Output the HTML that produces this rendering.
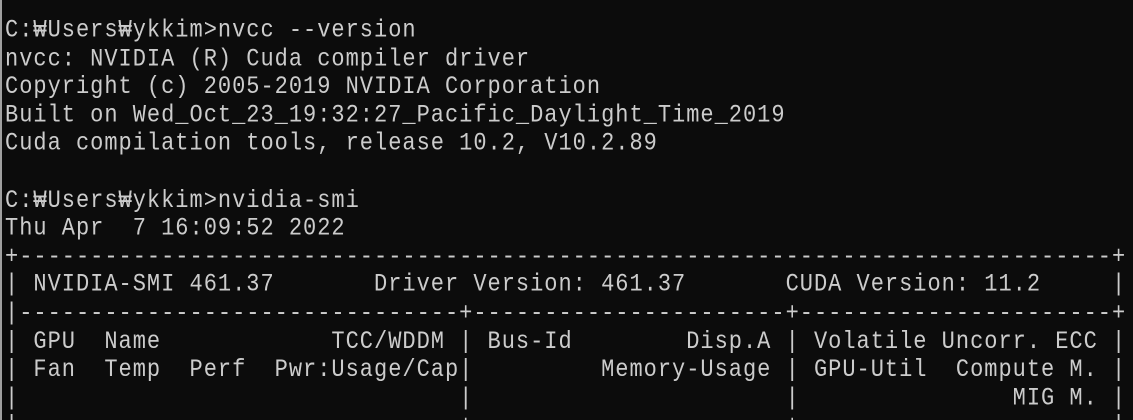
<!DOCTYPE html>
<html><head><meta charset="utf-8">
<style>
html,body{margin:0;padding:0;background:#0c0c0c;width:1133px;height:420px;overflow:hidden;}
.wrap{position:relative;width:1133px;height:420px;overflow:hidden;background:#0c0c0c;}
.bar{position:absolute;left:0;top:0;width:2px;height:420px;background:#a0a0a0;}
pre{position:absolute;left:5px;top:16.5px;margin:0;
font-family:"Liberation Mono","DejaVu Sans Mono",monospace;font-size:22px;line-height:24.6px;
letter-spacing:0.99px;color:#cccccc;white-space:pre;transform:scaleY(1.15);transform-origin:0 0;}
</style></head><body>
<div class="wrap">
<div class="bar"></div>
<pre>C:₩Users₩ykkim&gt;nvcc --version
nvcc: NVIDIA (R) Cuda compiler driver
Copyright (c) 2005-2019 NVIDIA Corporation
Built on Wed_Oct_23_19:32:27_Pacific_Daylight_Time_2019
Cuda compilation tools, release 10.2, V10.2.89

C:₩Users₩ykkim&gt;nvidia-smi
Thu Apr  7 16:09:52 2022
+-----------------------------------------------------------------------------+
| NVIDIA-SMI 461.37       Driver Version: 461.37       CUDA Version: 11.2     |
|-------------------------------+----------------------+----------------------+
| GPU  Name            TCC/WDDM | Bus-Id        Disp.A | Volatile Uncorr. ECC |
| Fan  Temp  Perf  Pwr:Usage/Cap|         Memory-Usage | GPU-Util  Compute M. |
|                               |                      |               MIG M. |
|===============================+======================+======================|</pre>
</div>
</body></html>
